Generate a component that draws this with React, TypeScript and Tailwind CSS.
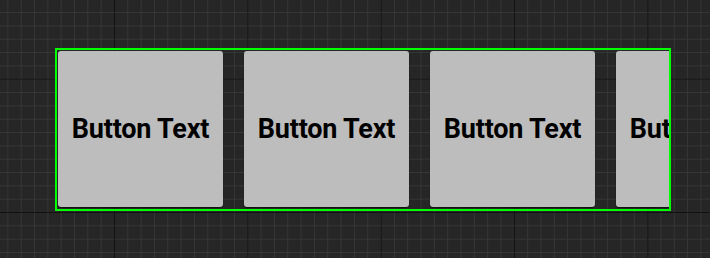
export default function App() {
    const buttons = ["Button Text", "Button Text", "Button Text", "Button Text"];

    return (
        <main className="w-[710px] h-[258px] overflow-hidden bg-[#262626] bg-[linear-gradient(to_right,#121212_1px,transparent_1px),linear-gradient(to_bottom,#121212_1px,transparent_1px),linear-gradient(to_right,#363636_1px,transparent_1px),linear-gradient(to_bottom,#363636_1px,transparent_1px)] bg-size-[133.333px_133.333px,133.333px_133.333px,13.3333px_13.3333px,13.3333px_13.3333px] bg-position-[114px_212px] pt-[48px] pl-[55px]">
            {/* scroll box */}
            <div className="w-[616px] h-[163px] border-2 border-[#00ff00] overflow-hidden p-px">
                <div className="flex gap-[21px]">
                    {buttons.map((label, i) => (
                        <button
                            key={i}
                            className="shrink-0 w-[165px] h-[156px] rounded-[3px] bg-[#bdbdbd] shadow-[0_1px_1px_rgba(0,0,0,0.6)] flex items-center justify-center font-['Roboto',sans-serif] font-bold text-[27px] tracking-[-0.2px] text-black whitespace-nowrap"
                        >
                            {label}
                        </button>
                    ))}
                </div>
            </div>
        </main>
    );
}
